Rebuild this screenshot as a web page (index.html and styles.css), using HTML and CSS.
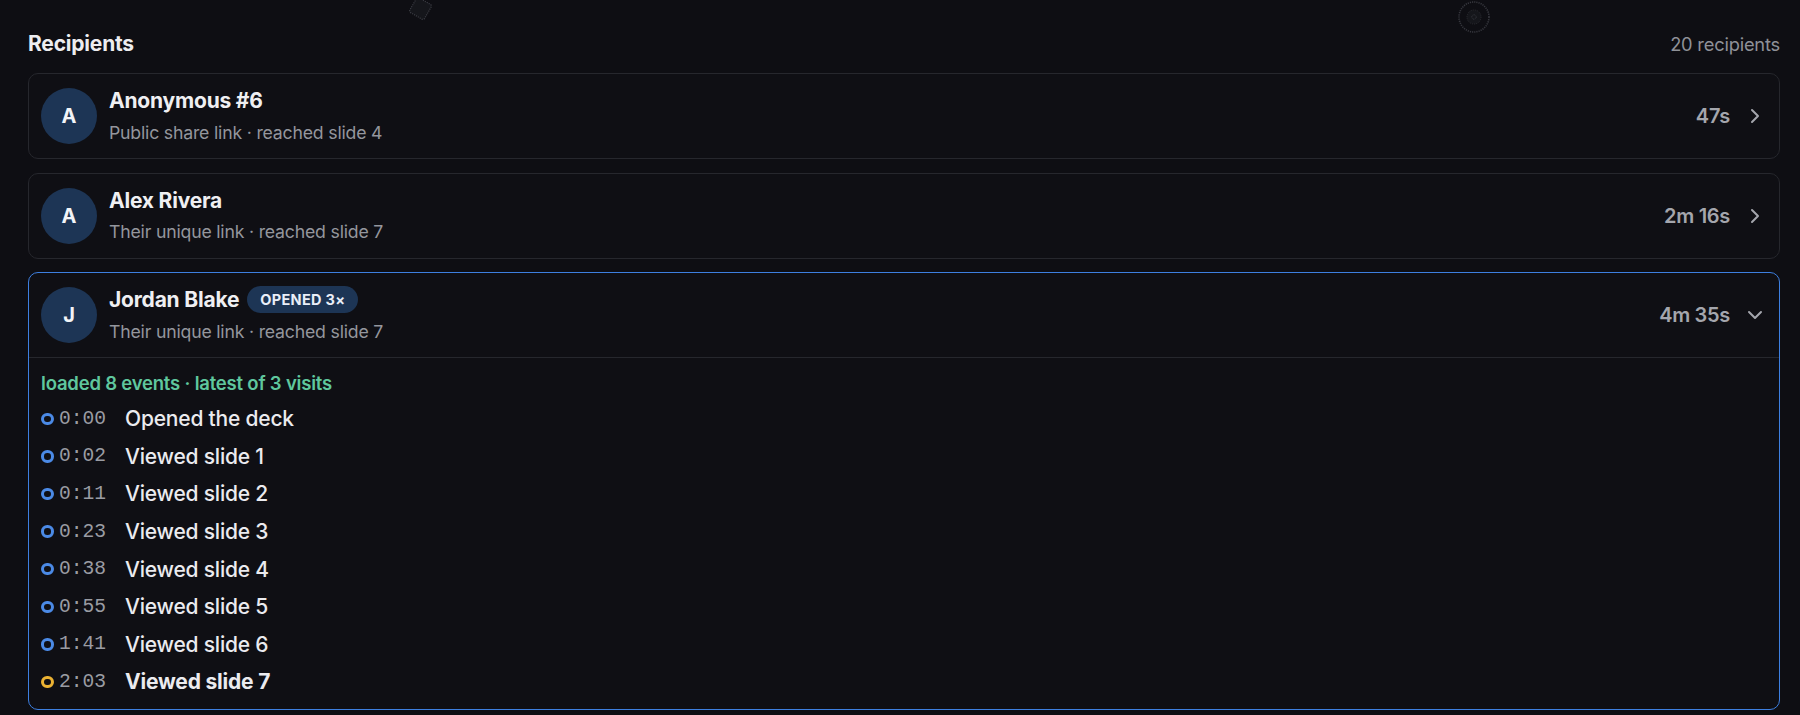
FILE: index.html
```html
<!DOCTYPE html>
<html lang="en">
<head>
<meta charset="utf-8">
<title>Recipients</title>
<link rel="stylesheet" href="styles.css">
</head>
<body>
<div class="decor decor-square"><svg width="30" height="26" viewBox="0 0 30 26"><rect x="6" y="1" width="17" height="17" rx="2" transform="rotate(30 14.5 9.5)" fill="#15161b" stroke="#3a3b42" stroke-width="1.2" stroke-dasharray="1.2 1"/></svg></div>
<div class="decor decor-circle"><svg width="34" height="34" viewBox="0 0 34 34"><circle cx="17" cy="17" r="15" fill="none" stroke="#36373e" stroke-width="1.6" stroke-dasharray="1.2 1"/><circle cx="17" cy="17" r="7" fill="#15161b" stroke="#2c2d33" stroke-width="1" stroke-dasharray="1 1"/><circle cx="17" cy="17" r="2.2" fill="none" stroke="#3a3b42" stroke-width="1" stroke-dasharray="0.8 0.8"/></svg></div>

<main class="page">
  <header class="section-head">
    <h2 class="section-title">Recipients</h2>
    <span class="section-count">20 recipients</span>
  </header>

  <div class="list">
    <div class="card">
      <div class="card-head">
        <div class="avatar">A</div>
        <div class="info">
          <div class="name-row"><span class="name">Anonymous #6</span></div>
          <div class="sub">Public share link · reached slide 4</div>
        </div>
        <div class="time">47s</div>
        <svg class="chev" width="24" height="24" viewBox="0 0 24 24" fill="none" stroke="currentColor" stroke-width="2" stroke-linecap="round" stroke-linejoin="round"><path d="m9 18 6-6-6-6"/></svg>
      </div>
    </div>

    <div class="card">
      <div class="card-head">
        <div class="avatar">A</div>
        <div class="info">
          <div class="name-row"><span class="name">Alex Rivera</span></div>
          <div class="sub">Their unique link · reached slide 7</div>
        </div>
        <div class="time">2m 16s</div>
        <svg class="chev" width="24" height="24" viewBox="0 0 24 24" fill="none" stroke="currentColor" stroke-width="2" stroke-linecap="round" stroke-linejoin="round"><path d="m9 18 6-6-6-6"/></svg>
      </div>
    </div>

    <div class="card card-open">
      <div class="card-head">
        <div class="avatar">J</div>
        <div class="info">
          <div class="name-row"><span class="name">Jordan Blake</span><span class="badge">OPENED 3×</span></div>
          <div class="sub">Their unique link · reached slide 7</div>
        </div>
        <div class="time">4m 35s</div>
        <svg class="chev" width="24" height="24" viewBox="0 0 24 24" fill="none" stroke="currentColor" stroke-width="2" stroke-linecap="round" stroke-linejoin="round"><path d="m6 9 6 6 6-6"/></svg>
      </div>
      <div class="card-body">
        <div class="loaded">loaded 8 events · latest of 3 visits</div>
        <ul class="events">
          <li class="event"><span class="ring"></span><span class="ts">0:00</span><span class="ev">Opened the deck</span></li>
          <li class="event"><span class="ring"></span><span class="ts">0:02</span><span class="ev">Viewed slide 1</span></li>
          <li class="event"><span class="ring"></span><span class="ts">0:11</span><span class="ev">Viewed slide 2</span></li>
          <li class="event"><span class="ring"></span><span class="ts">0:23</span><span class="ev">Viewed slide 3</span></li>
          <li class="event"><span class="ring"></span><span class="ts">0:38</span><span class="ev">Viewed slide 4</span></li>
          <li class="event"><span class="ring"></span><span class="ts">0:55</span><span class="ev">Viewed slide 5</span></li>
          <li class="event"><span class="ring"></span><span class="ts">1:41</span><span class="ev">Viewed slide 6</span></li>
          <li class="event event-last"><span class="ring ring-amber"></span><span class="ts">2:03</span><span class="ev">Viewed slide 7</span></li>
        </ul>
      </div>
    </div>
  </div>
</main>
</body>
</html>
```

FILE: styles.css
```css
* { box-sizing: border-box; }

html, body {
  margin: 0;
  padding: 0;
  background: #0e0e13;
  height: 715px;
  overflow: hidden;
}

body {
  font-family: Inter, "Noto Sans", "Liberation Sans", sans-serif;
  color: #ececf0;
  position: relative;
}

.decor {
  position: absolute;
  line-height: 0;
}
.decor-square { left: 406px; top: -1px; }
.decor-circle { left: 1457px; top: 0px; }

.page {
  padding: 30px 20px 0 28px;
}

.section-head {
  display: flex;
  justify-content: space-between;
  align-items: baseline;
  height: 28px;
  margin-bottom: 15px;
}

.section-title {
  margin: 0;
  font-size: 21px;
  line-height: 28px;
  font-weight: 700;
  letter-spacing: -0.2px;
  color: #ededf0;
}

.section-count {
  font-size: 18.3px;
  color: #8f9198;
  letter-spacing: -0.2px;
}

.list {
  display: flex;
  flex-direction: column;
  gap: 13.5px;
}

.card {
  border: 1px solid #26272d;
  border-radius: 10px;
  background: #0f0f14;
}

.card-open {
  border-color: #3d7fe0;
}

.card-head {
  display: flex;
  align-items: center;
  padding: 14px 12px;
}

.avatar {
  width: 56px;
  height: 56px;
  border-radius: 50%;
  background: #1d3555;
  color: #f2f4f8;
  font-weight: 700;
  font-size: 20px;
  display: flex;
  align-items: center;
  justify-content: center;
  flex: none;
}

.info {
  flex: 1;
  margin-left: 12px;
  display: flex;
  flex-direction: column;
  gap: 8.5px;
  align-self: flex-start;
}

.name-row {
  display: flex;
  align-items: center;
  gap: 8px;
  height: 25px;
}

.name {
  font-size: 21px;
  line-height: 25px;
  font-weight: 700;
  letter-spacing: -0.2px;
  color: #efeff2;
}

.badge {
  display: inline-flex;
  align-items: center;
  height: 27px;
  padding: 0 13px;
  border-radius: 14px;
  background: #1d3555;
  color: #e9eef8;
  font-size: 14.5px;
  font-weight: 700;
  letter-spacing: 0.3px;
}

.sub {
  font-size: 17.7px;
  line-height: 22px;
  color: #94969d;
  letter-spacing: -0.2px;
}

.time {
  font-size: 20px;
  font-weight: 600;
  color: #a4a6ad;
  letter-spacing: -0.3px;
  margin-right: 13px;
}

.chev {
  color: #a4a6ad;
  flex: none;
}

.card-body {
  border-top: 1px solid #26272d;
  padding: 13px 12px 8px 12px;
}

.loaded {
  font-size: 18.5px;
  line-height: 24px;
  font-weight: 600;
  color: #5fc79e;
  letter-spacing: -0.2px;
  margin-bottom: 5px;
}

.events {
  list-style: none;
  margin: 0;
  padding: 0;
}

.event {
  display: flex;
  align-items: center;
  height: 37.6px;
}

.ring {
  width: 12.5px;
  height: 12.5px;
  border-radius: 50%;
  border: 3px solid #4b8ae6;
  flex: none;
  margin-right: 5.5px;
}

.ring-amber {
  border-color: #ebb233;
}

.ts {
  font-family: "Liberation Mono", "DejaVu Sans Mono", monospace;
  font-size: 19.6px;
  color: #9a9ca3;
  width: 66px;
  flex: none;
}

.ev {
  font-size: 21px;
  font-weight: 500;
  color: #ebebef;
  letter-spacing: -0.2px;
}

.event-last .ev {
  font-weight: 700;
}
```
